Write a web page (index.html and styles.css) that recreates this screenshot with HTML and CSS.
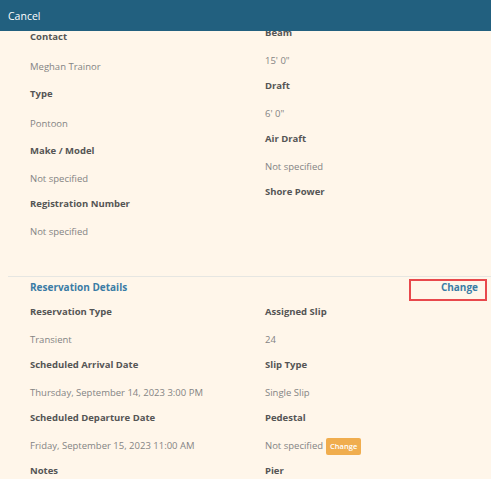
FILE: index.html
```html
<!DOCTYPE html>
<html>
<head>
<meta charset="utf-8">
<link rel="stylesheet" href="styles.css">
</head>
<body>
<header class="topbar"><span class="cancel">Cancel</span></header>
<main class="page">
  <section class="details boat">
    <div class="col col-left">
      <div class="item tall"><div class="label">Contact</div><div class="value">Meghan Trainor</div></div>
      <div class="item tall"><div class="label">Type</div><div class="value">Pontoon</div></div>
      <div class="item"><div class="label">Make / Model</div><div class="value">Not specified</div></div>
      <div class="item"><div class="label">Registration Number</div><div class="value">Not specified</div></div>
    </div>
    <div class="col col-right">
      <div class="item"><div class="label">Beam</div><div class="value">15' 0"</div></div>
      <div class="item"><div class="label">Draft</div><div class="value">6' 0"</div></div>
      <div class="item"><div class="label">Air Draft</div><div class="value">Not specified</div></div>
      <div class="item"><div class="label">Shore Power</div><div class="value"></div></div>
    </div>
  </section>
  <section class="reservation">
    <div class="section-head">
      <span class="section-title">Reservation Details</span>
      <a class="change-link">Change</a>
      <span class="highlight"></span>
    </div>
    <div class="details">
      <div class="col">
        <div class="item"><div class="label">Reservation Type</div><div class="value">Transient</div></div>
        <div class="item"><div class="label">Scheduled Arrival Date</div><div class="value">Thursday, September 14, 2023 3:00 PM</div></div>
        <div class="item"><div class="label">Scheduled Departure Date</div><div class="value">Friday, September 15, 2023 11:00 AM</div></div>
        <div class="item"><div class="label">Notes</div></div>
      </div>
      <div class="col">
        <div class="item"><div class="label">Assigned Slip</div><div class="value">24</div></div>
        <div class="item"><div class="label">Slip Type</div><div class="value">Single Slip</div></div>
        <div class="item"><div class="label">Pedestal</div><div class="value">Not specified <span class="btn-change">Change</span></div></div>
        <div class="item"><div class="label">Pier</div></div>
      </div>
    </div>
  </section>
</main>
</body>
</html>
```
FILE: styles.css
```css
html, body {
  margin: 0;
  padding: 0;
  background: #fff6ea;
  font-family: "Open Sans", "Noto Sans", sans-serif;
  overflow: hidden;
}
.topbar {
  position: fixed;
  top: 0;
  left: 0;
  right: 0;
  height: 31px;
  background: #22607f;
  display: flex;
  align-items: center;
  padding-left: 8px;
  z-index: 5;
}
.cancel {
  color: #ffffff;
  font-size: 10.5px;
}
.page {
  margin-left: 8px;
}
.details {
  display: grid;
  grid-template-columns: 235px 1fr;
  padding-left: 22px;
}
.boat {
  padding-top: 26px;
  height: 277px;
  border-bottom: 1px solid #e6e6e2;
  box-sizing: border-box;
}
.col-left {
  padding-top: 4px;
}
.item {
  display: flex;
  flex-direction: column;
}
.label {
  font-size: 9.5px;
  font-weight: 700;
  color: #555555;
  line-height: 14px;
  height: 14px;
  margin-bottom: 14px;
}
.value {
  font-size: 9.5px;
  color: #848484;
  line-height: 14px;
  height: 14px;
  margin-bottom: 11px;
  display: flex;
  align-items: center;
  white-space: nowrap;
}
.item.tall .label {
  margin-bottom: 16px;
}
.item.tall .value {
  margin-bottom: 13px;
}
.section-head {
  position: relative;
  display: flex;
  justify-content: space-between;
  align-items: center;
  height: 20px;
  padding: 0 13px 0 22px;
}
.section-title,
.change-link {
  font-size: 10px;
  font-weight: 700;
  color: #3a7ca5;
}
.highlight {
  position: absolute;
  left: 401px;
  top: 2px;
  width: 74px;
  height: 18px;
  border: 2.5px solid #e8484c;
}
.reservation .details {
  padding-top: 8px;
}
.btn-change {
  display: inline-block;
  margin-left: 3px;
  background: #f0ad4e;
  color: #ffffff;
  font-size: 7.5px;
  font-weight: 600;
  border-radius: 2px;
  padding: 0 4px;
  line-height: 17px;
  height: 17px;
}
```
